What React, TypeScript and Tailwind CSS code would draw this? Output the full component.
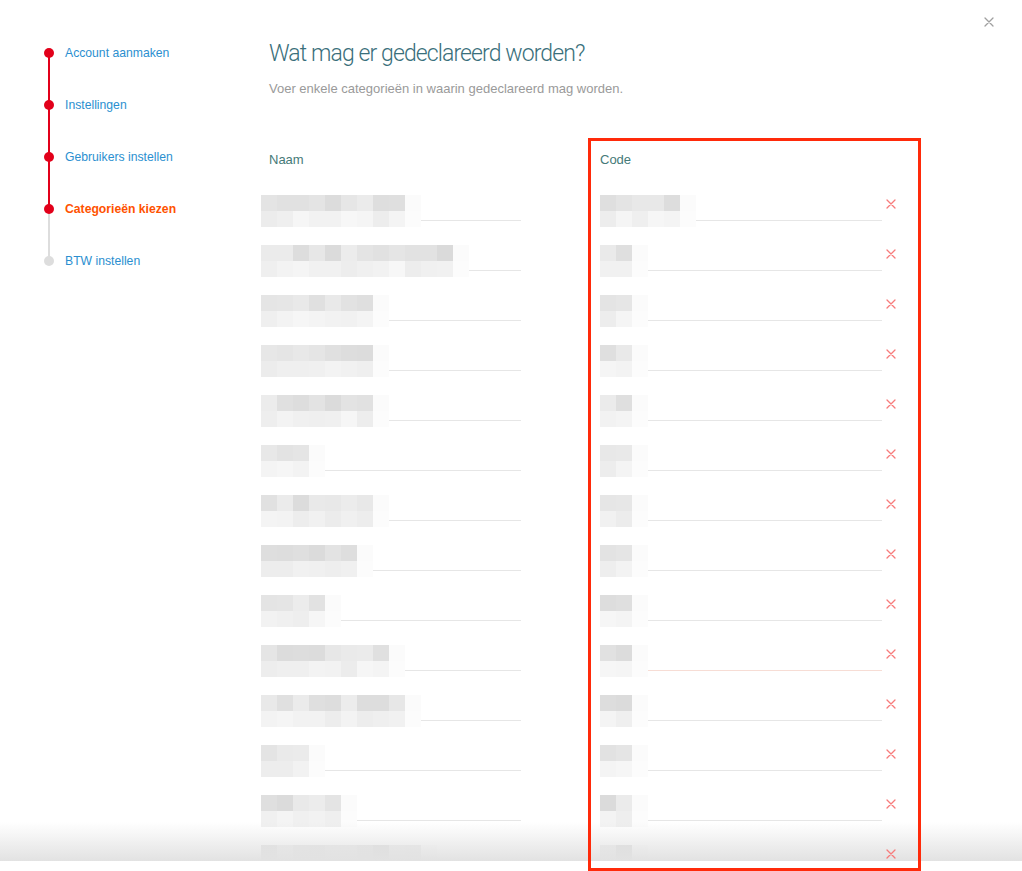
import React from "react";

const steps = [
  { label: "Account aanmaken", state: "done" },
  { label: "Instellingen", state: "done" },
  { label: "Gebruikers instellen", state: "done" },
  { label: "Categorieën kiezen", state: "active" },
  { label: "BTW instellen", state: "todo" },
];

const naamCells = [9, 12, 7, 7, 7, 3, 7, 6, 4, 8, 9, 3, 5, 10];
const codeCells = [5, 2, 2, 2, 2, 2, 2, 2, 2, 2, 2, 2, 2, 2];

function rand(seed: number) {
  const x = Math.sin(seed * 12.9898 + 78.233) * 43758.5453;
  return x - Math.floor(x);
}

function shade(seed: number, min: number, max: number) {
  const v = Math.round(min + (max - min) * rand(seed));
  return `rgb(${v},${v},${v})`;
}

function Mosaic({ cells, seed }: { cells: number; seed: number }) {
  const top = Array.from({ length: cells });
  return (
    <div className="pointer-events-none absolute left-0 top-[24px] flex flex-col">
      <div className="flex">
        {top.map((_, i) => (
          <div
            key={i}
            className="h-[16px] w-[16px]"
            style={{ backgroundColor: shade(seed * 31 + i, 218, 236) }}
          />
        ))}
        <div className="h-[16px] w-[16px]" style={{ backgroundColor: "#fbfbfb" }} />
      </div>
      <div className="flex">
        {top.map((_, i) => (
          <div
            key={i}
            className="h-[16px] w-[16px]"
            style={{ backgroundColor: shade(seed * 17 + i * 3 + 5, 236, 247) }}
          />
        ))}
        <div className="h-[16px] w-[16px]" style={{ backgroundColor: "#fcfcfc" }} />
      </div>
    </div>
  );
}

function CloseIcon({ className, color, size }: { className?: string; color: string; size: number }) {
  return (
    <svg width={size} height={size} viewBox="0 0 10 10" className={className}>
      <path d="M1 1 L9 9 M9 1 L1 9" stroke={color} strokeWidth="1.3" strokeLinecap="round" />
    </svg>
  );
}

export default function App() {
  return (
    <div
      className="relative h-[871px] w-[1022px] overflow-hidden bg-white"
      style={{ fontFamily: '"Liberation Sans", Arial, sans-serif' }}
    >
      {/* close */}
      <div className="absolute right-[28px] top-[17px]">
        <CloseIcon color="#a0a0a0" size={10} />
      </div>

      <div className="flex">
        {/* sidebar */}
        <div className="w-[269px] shrink-0 pl-[44px] pt-[27px]">
          {steps.map((s, i) => (
            <div key={s.label} className="relative flex h-[52px] items-center">
              {i < steps.length - 1 && (
                <div
                  className={`absolute left-[4px] top-[26px] h-[52px] w-[2px] ${
                    i < 3 ? "bg-[#e2001a]" : "bg-[#dddddd]"
                  }`}
                />
              )}
              <div
                className={`relative z-10 h-[10px] w-[10px] rounded-full ${
                  s.state === "todo" ? "bg-[#dddddd]" : "bg-[#e2001a]"
                }`}
              />
              <span
                className={`ml-[11px] text-[12.2px] ${
                  s.state === "active" ? "font-bold text-[#ff5200]" : "text-[#2b8fd0]"
                }`}
              >
                {s.label}
              </span>
            </div>
          ))}
        </div>

        {/* main */}
        <div className="flex flex-col pt-[38px]">
          <h1
            className="text-[23px] font-light leading-[32px] tracking-[-0.9px] text-[#3a6f7b]"
            style={{ fontFamily: '"Roboto", "Liberation Sans", sans-serif' }}
          >
            Wat mag er gedeclareerd worden?
          </h1>
          <p className="mt-[9px] text-[13px] leading-[20px] text-[#9a9a9a]">
            Voer enkele categorieën in waarin gedeclareerd mag worden.
          </p>

          <div className="mt-[51px] flex text-[13px] leading-[20px] text-[#457a78]">
            <div className="w-[331px]">Naam</div>
            <div>Code</div>
          </div>

          <div className="mt-[1px] flex flex-col">
            {naamCells.map((n, i) => (
              <div key={i} className="flex h-[50px]">
                <div className="relative -ml-[8px] w-[260px] border-b border-[#e6e6e6]">
                  <Mosaic cells={n} seed={i + 1} />
                </div>
                <div
                  className={`relative ml-[79px] w-[282px] border-b ${
                    i === 9 ? "border-[#f7ddd5]" : "border-[#e6e6e6]"
                  }`}
                >
                  <Mosaic cells={codeCells[i]} seed={i + 40} />
                </div>
                <div className="relative z-10 ml-[4px] flex h-[50px] items-start pt-[28px]">
                  <CloseIcon color="#f77b7b" size={10} />
                </div>
              </div>
            ))}
          </div>
        </div>
      </div>

      {/* bottom fade */}
      <div className="pointer-events-none absolute left-0 right-0 top-[822px] h-[39px] bg-linear-to-b from-white/0 to-[#e2e2e2]" />
      <div className="pointer-events-none absolute left-0 right-0 top-[861px] h-[10px] bg-white" />

      {/* annotation box */}
      <div className="pointer-events-none absolute left-[588px] top-[138px] z-20 h-[733px] w-[333px] border-[3px] border-[#ff2a0a]" />
    </div>
  );
}
